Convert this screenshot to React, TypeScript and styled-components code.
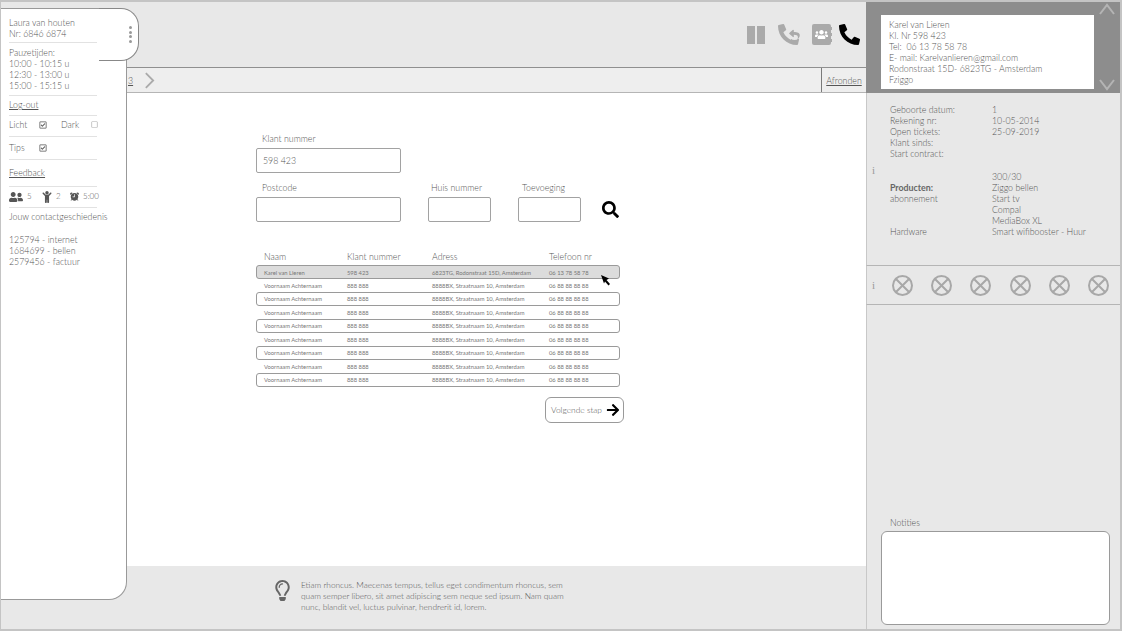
import * as React from 'react';
import styled, { createGlobalStyle, css } from 'styled-components';
import {
  FaArrowRight,
  FaChild,
  FaPhoneAlt,
  FaRegCheckSquare,
  FaRegLightbulb,
  FaRegSquare,
  FaReply,
  FaSearch,
  FaUsers,
  FaUserFriends,
} from 'react-icons/fa';
import { IoAlarm } from 'react-icons/io5';

const GlobalStyle = createGlobalStyle`
  html, body {
    margin: 0;
    padding: 0;
    background: #fff;
  }

  * {
    box-sizing: border-box;
  }
`;

const Frame = styled.div`
  position: relative;
  display: grid;
  grid-template-columns: 865px 254px;
  width: 1122px;
  height: 631px;
  overflow: hidden;
  border: 2px solid #c4c4c4;
  border-left-width: 1px;
  font-family: Lato, "Open Sans", "Liberation Sans", sans-serif;
  font-size: 8.8px;
  font-weight: 300;
  color: #555;
`;

const Main = styled.main`
  display: flex;
  flex-direction: column;
  height: 627px;
`;

const TopBar = styled.header`
  display: flex;
  align-items: center;
  justify-content: flex-end;
  gap: 13px;
  flex: 0 0 66px;
  padding: 0 6px 0 0;
  background: #e8e8e8;
  border-bottom: 1px solid #8f8f8f;
`;

const SubBar = styled.div`
  display: flex;
  align-items: center;
  justify-content: space-between;
  flex: 0 0 25px;
  padding-left: 127px;
  background: #eeeeee;
  border-bottom: 1px solid #b5b5b5;
`;

const Steps = styled.div`
  display: flex;
  align-items: center;
  gap: 11px;
`;

const StepLink = styled.span`
  text-decoration: underline;
`;

const FinishCell = styled.a`
  display: flex;
  align-items: center;
  justify-content: center;
  width: 45px;
  height: 100%;
  border-left: 1px solid #7a7a7a;
  text-decoration: underline;
`;

const Content = styled.section`
  flex: 1;
  padding: 40px 0 0 255px;
  background: #fff;
`;

const FieldLabel = styled.label`
  display: block;
  height: 15px;
  padding-left: ${p => p.$indent ?? 6}px;
  line-height: 11px;
  white-space: nowrap;
`;

const TextBox = styled.div`
  display: flex;
  align-items: center;
  width: ${p => p.$width}px;
  height: 25px;
  padding-left: 6px;
  border: 1px solid #a2a2a2;
  border-radius: 2px;
  background: #fff;
`;

const FormRow = styled.div`
  display: flex;
  align-items: flex-end;
  margin-top: ${p => p.$top ?? 0}px;
`;

const Field = styled.div`
  margin-right: ${p => p.$gap ?? 0}px;
`;

const SearchButton = styled.div`
  display: flex;
  align-items: center;
  height: 25px;
  margin-left: 21px;
  font-size: 17px;
  color: #000;
`;

const Table = styled.div`
  position: relative;
  width: 364px;
  margin-top: 28px;
`;

const cols = '83px 85px 117px 1fr';

const TableHead = styled.div`
  display: grid;
  grid-template-columns: ${cols};
  height: 15px;
  padding-left: 8px;
  line-height: 14px;
`;

const Row = styled.div`
  display: grid;
  grid-template-columns: ${cols};
  align-items: center;
  height: 14px;
  margin-bottom: -0.55px;
  padding-left: 7px;
  font-size: 5.8px;
  font-weight: 400;
  white-space: nowrap;
  color: #777;
  background: ${p => (p.$selected ? '#dcdcdc' : 'transparent')};
  border: 1px solid ${p => (p.$selected || p.$outlined ? '#9a9a9a' : 'transparent')};
  border-radius: 3px;
`;

const Cursor = styled.svg`
  position: absolute;
  left: 345px;
  top: 25px;
`;

const NextRow = styled.div`
  display: flex;
  width: 368px;
  justify-content: flex-end;
  margin-top: 11px;
`;

const NextButton = styled.button`
  display: flex;
  align-items: center;
  justify-content: space-between;
  width: 79px;
  height: 26px;
  padding: 0 3px 0 5px;
  border: 1px solid #9a9a9a;
  border-radius: 6px;
  background: #fff;
  font-family: inherit;
  font-size: 8.4px;
  font-weight: 300;
  color: #555;
  white-space: nowrap;

  svg {
    font-size: 14px;
    color: #000;
  }
`;

const Footer = styled.footer`
  display: flex;
  flex: 0 0 63px;
  gap: 8px;
  padding: 14px 0 0 271px;
  background: #e8e8e8;
`;

const BulbIcon = styled(FaRegLightbulb)`
  flex: none;
  font-size: 21px;
  color: #666;
`;

const FooterText = styled.p`
  width: 272px;
  margin: 0;
  font-size: 8.3px;
  line-height: 11px;
`;

const Aside = styled.aside`
  display: flex;
  flex-direction: column;
  height: 627px;
  background: #e8e8e8;
`;

const lowerEdge = css`
  border-left: 1px solid #c8c8c8;
`;

const ContactBand = styled.div`
  display: flex;
  flex: 0 0 91px;
  padding: 13px 0 0 15px;
  background: #8d8d8d;
`;

const ContactCard = styled.div`
  width: 213px;
  height: 74px;
  padding: 4px 8px;
  background: #fff;
  line-height: 11.1px;
`;

const Scroller = styled.div`
  display: flex;
  flex: 1;
  flex-direction: column;
  align-items: center;
  justify-content: space-between;
  height: 88px;
  margin-top: -12px;
`;

const Details = styled.div`
  ${lowerEdge}
  position: relative;
  flex: 0 0 173px;
  padding: 11px 0 0 23px;
  border-bottom: 1px solid #b5b5b5;
`;

const DetailGrid = styled.div`
  display: grid;
  grid-template-columns: 102px 1fr;
  line-height: 11px;
`;

const Spacer = styled.div`
  grid-column: 1 / span 2;
  height: 12px;
`;

const StrongLabel = styled.span`
  font-weight: 700;
  color: #666;
`;

const InfoMark = styled.span`
  position: absolute;
  left: 5px;
  top: ${p => p.$top}px;
  font-family: "Liberation Serif", serif;
  font-size: 11px;
  color: #999;
`;

const StatusRow = styled.div`
  ${lowerEdge}
  position: relative;
  display: flex;
  flex: 0 0 39px;
  align-items: center;
  gap: 18.2px;
  padding-left: 25px;
  border-bottom: 1px solid #b5b5b5;
`;

const Notes = styled.div`
  ${lowerEdge}
  display: flex;
  flex: 1;
  flex-direction: column;
  justify-content: flex-end;
  padding: 0 10px 4px 14px;
`;

const NotesLabel = styled.div`
  height: 14px;
  padding-left: 9px;
`;

const NotesBox = styled.div`
  height: 94px;
  background: #fff;
  border: 1px solid #9a9a9a;
  border-radius: 6px;
`;

const Sidebar = styled.nav`
  position: absolute;
  left: 0;
  top: 6px;
  width: 126px;
  height: 592px;
  padding: 8px 0 0 8px;
  background: #fff;
  border: 1px solid #999;
  border-left: none;
  border-radius: 0 18px 18px 0;
  border-bottom-left-radius: 0;
  line-height: 11px;
`;

const SideTab = styled.div`
  position: absolute;
  right: -13px;
  top: -1px;
  display: flex;
  flex-direction: column;
  align-items: flex-end;
  justify-content: center;
  gap: 1.5px;
  width: 40px;
  height: 53px;
  padding: 0 6px 0 0;
  background: #fff;
  border: 1px solid #888;
  border-left: none;
  border-radius: 0 18px 18px 0;
`;

const TabDot = styled.i`
  display: block;
  width: 3px;
  height: 3px;
  background: #999;
  border-radius: 50%;
`;

const SideBlock = styled.div`
  position: relative;
  width: 88px;
  padding: ${p => p.$pad ?? '0'};
  margin-bottom: ${p => p.$gap ?? 0}px;
  border-bottom: ${p => (p.$plain ? 'none' : '1px solid #e2e2e2')};
  white-space: nowrap;
`;

const ToggleRow = styled.div`
  display: grid;
  grid-template-columns: ${p => p.$cols};
  align-items: center;
  height: 11px;

  svg {
    font-size: 8px;
    color: #555;
  }
`;

const DimBox = styled(FaRegSquare)`
  && {
    font-size: 7px;
    color: #aaa;
  }
`;

const UnderlineLink = styled.span`
  text-decoration: underline;
`;

const StatsRow = styled.div`
  display: flex;
  align-items: center;
  height: 11px;
`;

const StatIcon = styled.span`
  display: flex;
  width: ${p => p.$w}px;
  font-size: ${p => p.$size}px;
  color: #555;
`;

const StatValue = styled.span`
  width: ${p => p.$w}px;
  font-size: 8px;
`;

const HeaderButton = styled.div`
  position: relative;
  display: flex;
  align-items: center;
  justify-content: center;
  color: ${p => p.$color ?? '#aaa'};
  font-size: ${p => p.$size ?? 20}px;
`;

const ReplyMark = styled(FaReply)`
  position: absolute;
  right: -1px;
  top: 5px;
  font-size: 11px;
  background: #e8e8e8;
  border-radius: 50%;
`;

const BookCover = styled.div`
  position: relative;
  display: flex;
  align-items: center;
  justify-content: center;
  width: 19px;
  height: 21px;
  margin-right: -5px;
  background: #aaa;
  border-radius: 2px;
  color: #fff;
  font-size: 13px;

  &::after {
    content: '';
    position: absolute;
    right: -1px;
    top: 3px;
    bottom: 3px;
    width: 1px;
    background: repeating-linear-gradient(#aaa 0 3px, transparent 3px 6px);
  }
`;

function PauseIcon() {
  return (
    <svg width="18" height="18" viewBox="0 0 18 18">
      <rect x="0" y="0" width="8" height="18" fill="#aaa" />
      <rect x="10" y="0" width="8" height="18" fill="#aaa" />
    </svg>
  );
}

function StatusIcon() {
  return (
    <svg width="21" height="21" viewBox="0 0 21 21" fill="none" stroke="#a8a8a8" strokeWidth="2">
      <circle cx="10.5" cy="10.5" r="9.5" />
      <path d="M4 4l13 13M17 4L4 17" />
    </svg>
  );
}

function Chevron(props: { direction: 'up' | 'down' | 'right'; color: string; width: number; height: number }) {
  const paths = {
    up: 'M1 11L8 2l7 9',
    down: 'M1 1l7 9 7-9',
    right: 'M2 1l8 8-8 8',
  };
  const box = props.direction === 'right' ? '0 0 12 18' : '0 0 16 12';
  return (
    <svg width={props.width} height={props.height} viewBox={box} fill="none" stroke={props.color} strokeWidth="2">
      <path d={paths[props.direction]} />
    </svg>
  );
}

const rows = Array.from({ length: 8 }, (_, i) => i);

export default function App() {
  return (
    <>
      <GlobalStyle />
      <Frame>
        <Main>
          <TopBar>
            <HeaderButton><PauseIcon /></HeaderButton>
            <HeaderButton $size={21}>
              <FaPhoneAlt />
              <ReplyMark />
            </HeaderButton>
            <HeaderButton>
              <BookCover><FaUsers /></BookCover>
            </HeaderButton>
            <HeaderButton $color="#000" $size={21}><FaPhoneAlt /></HeaderButton>
          </TopBar>
          <SubBar>
            <Steps>
              <StepLink>3</StepLink>
              <Chevron direction="right" color="#aaa" width={11} height={17} />
            </Steps>
            <FinishCell>Afronden</FinishCell>
          </SubBar>
          <Content>
            <Field>
              <FieldLabel>Klant nummer</FieldLabel>
              <TextBox $width={145}>598 423</TextBox>
            </Field>
            <FormRow $top={9}>
              <Field $gap={27}>
                <FieldLabel>Postcode</FieldLabel>
                <TextBox $width={145} />
              </Field>
              <Field $gap={27}>
                <FieldLabel $indent={3}>Huis nummer</FieldLabel>
                <TextBox $width={63} />
              </Field>
              <Field>
                <FieldLabel $indent={4}>Toevoeging</FieldLabel>
                <TextBox $width={63} />
              </Field>
              <SearchButton><FaSearch /></SearchButton>
            </FormRow>
            <Table>
              <TableHead>
                <span>Naam</span>
                <span>Klant nummer</span>
                <span>Adress</span>
                <span>Telefoon nr</span>
              </TableHead>
              <Row $selected>
                <span>Karel van Lieren</span>
                <span>598 423</span>
                <span>6823TG, Rodonstraat 15D, Amsterdam</span>
                <span>06 13 78 58 78</span>
              </Row>
              {rows.map(i => (
                <Row key={i} $outlined={i % 2 === 1}>
                  <span>Voornaam Achternaam</span>
                  <span>888 888</span>
                  <span>8888BX, Straatnaam 10, Amsterdam</span>
                  <span>06 88 88 88 88</span>
                </Row>
              ))}
              <Cursor width="10" height="11" viewBox="0 0 10 11">
                <path d="M0 0l8 3.5-2.5 1.5 3.5 4-1.5 1.5-3.5-4L3 8.5z" fill="#000" />
              </Cursor>
            </Table>
            <NextRow>
              <NextButton>
                Volgende stap
                <FaArrowRight />
              </NextButton>
            </NextRow>
          </Content>
          <Footer>
            <BulbIcon />
            <FooterText>
              Etiam rhoncus. Maecenas tempus, tellus eget condimentum rhoncus, sem quam semper libero, sit amet adipiscing sem neque sed ipsum. Nam quam nunc, blandit vel, luctus pulvinar, hendrerit id, lorem.
            </FooterText>
          </Footer>
        </Main>
        <Aside>
          <ContactBand>
            <ContactCard>
              Karel van Lieren<br />
              Kl. Nr 598 423<br />
              Tel:&nbsp; 06 13 78 58 78<br />
              E- mail: Karelvanlieren@gmail.com<br />
              Rodonstraat 15D- 6823TG - Amsterdam<br />
              Fziggo
            </ContactCard>
            <Scroller>
              <Chevron direction="up" color="#b4b4b4" width={16} height={12} />
              <Chevron direction="down" color="#b4b4b4" width={16} height={12} />
            </Scroller>
          </ContactBand>
          <Details>
            <InfoMark $top={71}>i</InfoMark>
            <DetailGrid>
              <span>Geboorte datum:</span><span>1</span>
              <span>Rekening nr:</span><span>10-05-2014</span>
              <span>Open tickets:</span><span>25-09-2019</span>
              <span>Klant sinds:</span><span />
              <span>Start contract:</span><span />
              <Spacer />
              <span /><span>300/30</span>
              <StrongLabel>Producten:</StrongLabel><span>Ziggo bellen</span>
              <span>abonnement</span><span>Start tv</span>
              <span /><span>Compal</span>
              <span /><span>MediaBox XL</span>
              <span>Hardware</span><span>Smart wifibooster - Huur</span>
            </DetailGrid>
          </Details>
          <StatusRow>
            <InfoMark $top={13}>i</InfoMark>
            {[0, 1, 2, 3, 4, 5].map(i => <StatusIcon key={i} />)}
          </StatusRow>
          <Notes>
            <NotesLabel>Notities</NotesLabel>
            <NotesBox />
          </Notes>
        </Aside>
        <Sidebar>
          <SideTab>
            <TabDot />
            <TabDot />
            <TabDot />
            <TabDot />
          </SideTab>
          <SideBlock $pad="0 0 3px" $gap={4}>
            Laura van houten<br />
            Nr: 6846 6874
          </SideBlock>
          <SideBlock $pad="0 0 4px" $gap={3}>
            Pauzetijden:<br />
            10:00 - 10:15 u<br />
            12:30 - 13:00 u<br />
            15:00 - 15:15 u
          </SideBlock>
          <SideBlock $pad="0 0 5px" $gap={3}>
            <UnderlineLink>Log-out</UnderlineLink>
          </SideBlock>
          <SideBlock $pad="0 0 6px" $gap={5}>
            <ToggleRow $cols="30px 22px 30px 8px">
              <span>Licht</span>
              <FaRegCheckSquare />
              <span>Dark</span>
              <DimBox />
            </ToggleRow>
          </SideBlock>
          <SideBlock $pad="0 0 6px" $gap={7}>
            <ToggleRow $cols="30px 10px">
              <span>Tips</span>
              <FaRegCheckSquare />
            </ToggleRow>
          </SideBlock>
          <SideBlock $pad="0 0 8px" $gap={4}>
            <UnderlineLink>Feedback</UnderlineLink>
          </SideBlock>
          <SideBlock $pad="0 0 5px" $gap={3}>
            <StatsRow>
              <StatIcon $w={20} $size={14}><FaUserFriends /></StatIcon>
              <StatValue $w={16}>5</StatValue>
              <StatIcon $w={16} $size={12}><FaChild /></StatIcon>
              <StatValue $w={14}>2</StatValue>
              <StatIcon $w={16} $size={11}><IoAlarm /></StatIcon>
              <StatValue $w={14}>5:00</StatValue>
            </StatsRow>
          </SideBlock>
          <SideBlock $plain $gap={12}>Jouw contactgeschiedenis</SideBlock>
          <SideBlock $plain>
            125794 - internet<br />
            1684699 - bellen<br />
            2579456 - factuur
          </SideBlock>
        </Sidebar>
      </Frame>
    </>
  );
}
